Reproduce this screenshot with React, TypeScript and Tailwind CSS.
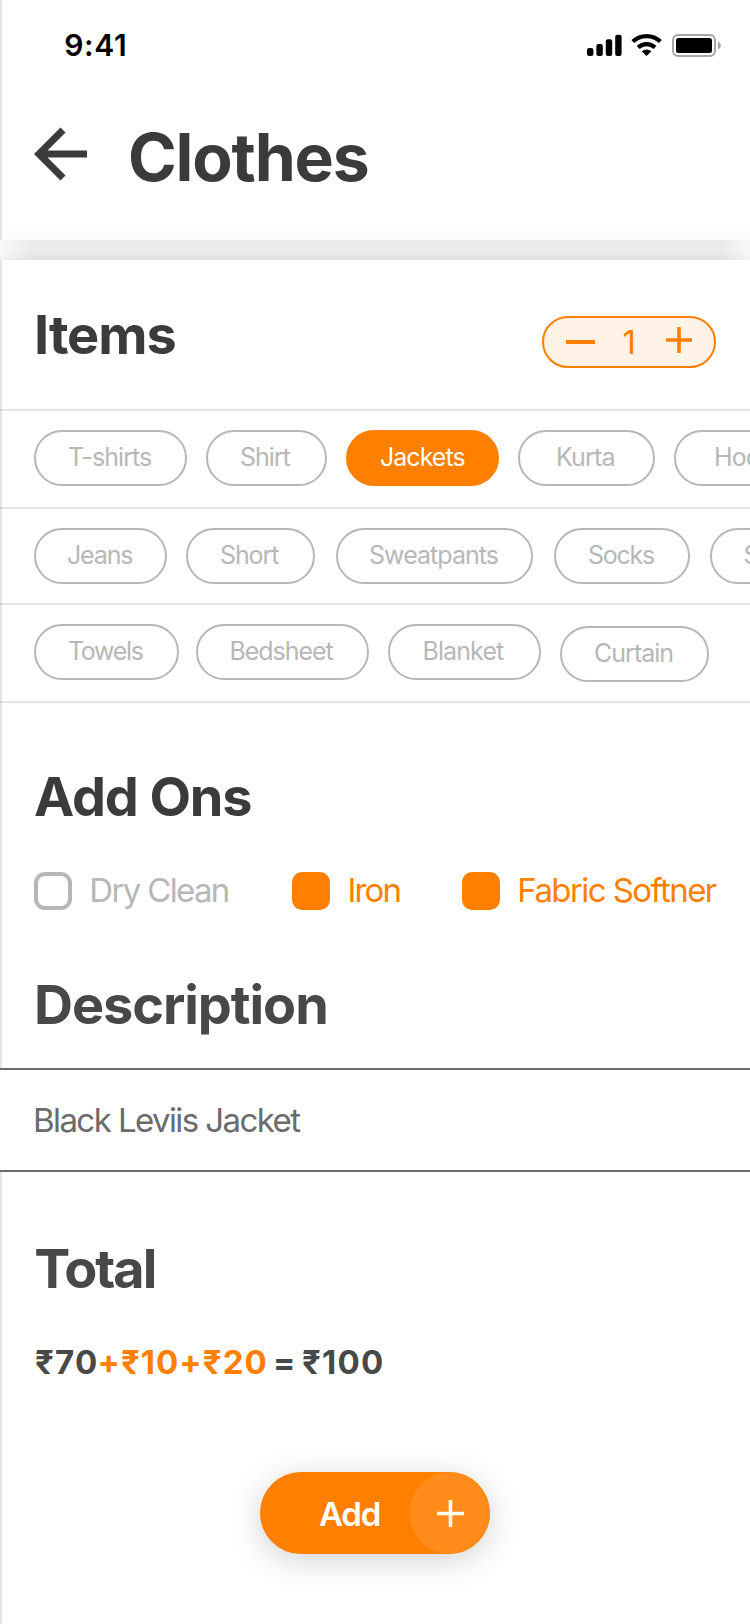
type Chip = { label: string; box: string; text: string; active?: boolean };

const rows: { wrap: string; chips: Chip[] }[] = [
  {
    wrap: 'h-[98px] pt-[19px]',
    chips: [
      { label: 'T-shirts', box: 'ml-[34px] w-[152.500px]', text: 'pl-[32px] tracking-[-0.94px]' },
      { label: 'Shirt', box: 'ml-[19.500px] w-[120.500px]', text: 'pl-[32px] tracking-[-1.07px]' },
      { label: 'Jackets', box: 'ml-[19.500px] w-[152.500px]', text: 'pl-[32px] tracking-[-0.98px]', active: true },
      { label: 'Kurta', box: 'ml-[19.500px] w-[136.500px]', text: 'pl-[36px] tracking-[-0.84px]' },
      { label: 'Hoodies', box: 'ml-[19.500px] w-[160px]', text: 'pl-[38px] tracking-[-0.9px]' },
    ],
  },
  {
    wrap: 'h-[96px] pt-[19px]',
    chips: [
      { label: 'Jeans', box: 'ml-[34px] w-[132.500px]', text: 'pl-[31px] tracking-[-1.15px]' },
      { label: 'Short', box: 'ml-[19.500px] w-[128.500px]', text: 'pl-[32px] tracking-[-1.1px]' },
      { label: 'Sweatpants', box: 'ml-[21.500px] w-[196.500px]', text: 'pl-[31px] tracking-[-0.95px]' },
      { label: 'Socks', box: 'ml-[21px] w-[136.500px]', text: 'pl-[32.500px] tracking-[-1.26px]' },
      { label: 'Shoes', box: 'ml-[19.500px] w-[140px]', text: 'pl-[32px] tracking-[-1.1px]' },
    ],
  },
  {
    wrap: 'h-[98px] pt-[19px]',
    chips: [
      { label: 'Towels', box: 'ml-[34px] w-[144.500px]', text: 'pl-[32px] tracking-[-1.33px]' },
      { label: 'Bedsheet', box: 'ml-[17.500px] w-[172.500px]', text: 'pl-[31.500px] tracking-[-1.05px]' },
      { label: 'Blanket', box: 'ml-[19.500px] w-[152.500px]', text: 'pl-[32.500px] tracking-[-0.9px]' },
      { label: 'Curtain', box: 'ml-[19.500px] mt-[2px] w-[148.500px]', text: 'pl-[32px] tracking-[-0.99px]' },
    ],
  },
];

function ChipButton({ label, box, text, active }: Chip) {
  const tone = active ? 'border-[#ff8000] bg-[#ff8000] text-white' : 'border-[#b7b7b7] bg-white text-[#b7b7b7]';
  return (
    <button className={`h-[56px] shrink-0 rounded-full border-2 pb-[2px] text-left text-[25px] leading-[51px] whitespace-nowrap ${tone} ${box} ${text}`}>
      {label}
    </button>
  );
}

function StatusIcons() {
  return (
    <svg width="150" height="30" viewBox="580 30 150 30" className="absolute top-[30px] left-[580px]">
      <rect x="587" y="48" width="6.4" height="8" rx="2" />
      <rect x="596.4" y="44" width="6.4" height="12" rx="2" />
      <rect x="605.8" y="39.3" width="6.4" height="16.7" rx="2" />
      <rect x="615.2" y="34.7" width="6.4" height="21.3" rx="2" />
      <g fill="none" stroke="#000" strokeWidth="4.2">
        <path d="M632.8 41.6a20 20 0 0 1 27.6 0" />
        <path d="M638.2 47.4a12.2 12.2 0 0 1 16.8 0" />
      </g>
      <path d="M646.6 56l-4.8-4.700a7 7 0 0 1 9.600 0z" />
      <rect x="673" y="35" width="42" height="21" rx="5" fill="none" stroke="#a6a6a6" strokeWidth="2" />
      <rect x="676" y="38" width="36" height="15" rx="2.5" />
      <path d="M718 41.5v8c1.8-.8 2.8-2.2 2.8-4s-1-3.2-2.8-4z" fill="#a6a6a6" />
    </svg>
  );
}

export default function App() {
  return (
    <div
      className="relative flex h-[1624px] w-[750px] flex-col overflow-hidden bg-white text-[#3b3b3b]"
      style={{ fontFamily: 'Inter, "Liberation Sans", sans-serif' }}
    >
      <header className="h-[240px] shrink-0 border-l-2 border-[#e5e5e5] bg-[linear-gradient(180deg,#fff_225px,#fbfbfb_240px)]">
        <div className="h-[90px] pt-[25px] pl-[62.3px] text-[30px] leading-[40px] font-semibold tracking-[0.6px] text-black">
          9:41
          <StatusIcons />
        </div>
        <div className="flex h-[132px] items-center pl-8">
          <svg width="54" height="54" viewBox="0 0 54 54" fill="none" stroke="#3b3b3b" strokeWidth="7.2" className="mb-[5px]">
            <path d="M29 3L5 27l24 24M5.500 27H53" />
          </svg>
          <h1 className="mt-[2px] ml-[40px] text-[66px] leading-[80px] font-bold tracking-[-1.2px]">Clothes</h1>
        </div>
      </header>

      <div className="flex h-5 shrink-0 bg-[linear-gradient(180deg,#eaeaea,#ededed_50%,#e0e0e0)]">
        <div className="w-8 bg-[linear-gradient(90deg,rgba(255,255,255,.65),transparent)]" />
        <div className="ml-auto w-7 bg-[linear-gradient(270deg,rgba(255,255,255,.65),transparent)]" />
      </div>

      <main className="flex flex-1 flex-col border-l-2 border-[#e5e5e5]">
        <div className="flex h-[149px] items-start">
          <h2 className="mt-[45px] ml-8 text-[54px] leading-[60px] font-bold tracking-[-1.04px]">Items</h2>
          <div className="mt-[56px] mr-[34px] ml-auto flex h-[52px] w-[174px] items-start rounded-full border-2 border-[#ff8000] bg-[#fff2e6] text-[#ff8000]">
            <svg width="29" height="4" className="mt-[22px] ml-[21.500px]"><path d="M0 2h29" stroke="currentColor" strokeWidth="4" /></svg>
            <span className="mt-[4px] ml-[28px] w-[18px] text-[33px] leading-[40px]">1</span>
            <svg width="26" height="26" className="mt-[9px] ml-[25px]"><path d="M0 13h26M13 0v26" stroke="currentColor" strokeWidth="3.600" /></svg>
          </div>
        </div>

        <div className="-ml-[2px]">
          {rows.map((row, i) => (
            <div key={i} className={`flex items-start overflow-hidden border-t-2 border-black/10 ${row.wrap}`}>
              {row.chips.map((chip) => (
                <ChipButton key={chip.label} {...chip} />
              ))}
            </div>
          ))}
          <div className="h-[2px] bg-black/10" />
        </div>

        <h2 className="mt-[64px] ml-[32px] text-[54px] leading-[60px] font-bold tracking-[-1.14px]">Add Ons</h2>
        <div className="mt-[45px] flex h-[38px] items-center text-[33px] leading-[38px] whitespace-nowrap text-[#ff8000]">
          <span className="ml-8 size-[38px] rounded-[11px] border-4 border-[#b7b7b7]" />
          <span className="-mt-[2px] ml-[17.300px] w-[202.700px] tracking-[-1.65px] text-[#b7b7b7]">Dry Clean</span>
          <span className="size-[38px] rounded-[10px] bg-[#ff8000]" />
          <span className="-mt-[2px] ml-[17.500px] w-[114.500px] tracking-[-1.84px]">Iron</span>
          <span className="size-[38px] rounded-[10px] bg-[#ff8000]" />
          <span className="-mt-[2px] ml-[17.300px] tracking-[-1.58px]">Fabric Softner</span>
        </div>

        <h2 className="mt-[65px] ml-8 text-[54px] leading-[60px] font-bold tracking-[-1.06px] text-[#484848]">Description</h2>
        <div className="mt-[33px] -ml-[2px] h-[104px] border-y-2 border-[#6b6969] bg-white pl-[33px] text-[33px] leading-[100px] tracking-[-1.58px] text-[#6b6b6b]">
          Black Leviis Jacket
        </div>

        <h2 className="mt-[67px] ml-[32.300px] text-[54px] leading-[60px] font-bold tracking-[-1.98px] text-[#484848]">Total</h2>
        <div className="mt-[43px] ml-[33px] flex text-[33px] leading-[40px] font-bold whitespace-pre text-[#484848]">
          <span className="w-[62.500px] tracking-[1.2px]">₹70</span>
          <span className="w-[175.500px] tracking-[1.03px] text-[#ff8000]">+₹10+₹20</span>
          <span className="w-[29px]">=</span>
          <span className="tracking-[1.2px]">₹100</span>
        </div>

        <button className="mt-[90px] ml-[258px] flex h-[82px] w-[230px] items-center overflow-hidden rounded-full bg-[#ff8000] text-[33px] font-semibold text-white shadow-[0_6px_32px_rgba(0,0,0,0.18)]">
          <span className="mt-[2px] ml-[59px] w-[91px] text-left leading-[40px] tracking-[-1.2px]">Add</span>
          <span className="flex h-[82px] w-20 items-center justify-center rounded-full bg-[#ff8c1a]">
            <svg width="27" height="27"><path d="M0 13.500h27M13.500 0v27" stroke="#fff" strokeWidth="3.600" /></svg>
          </span>
        </button>
      </main>
    </div>
  );
}
